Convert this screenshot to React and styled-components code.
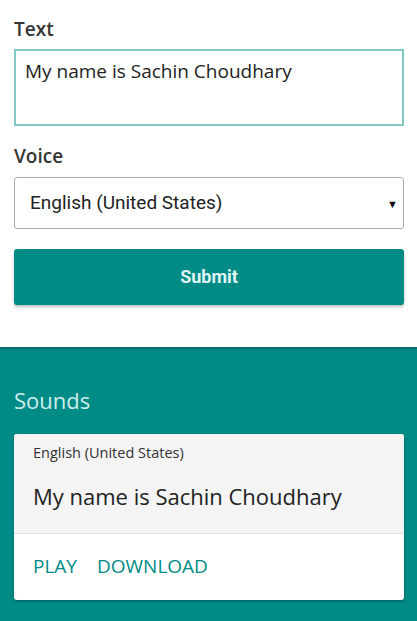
import React from 'react';
import styled, { createGlobalStyle } from 'styled-components';

const GlobalStyle = createGlobalStyle`
  html, body {
    margin: 0;
    padding: 0;
    background: #ffffff;
  }
  body {
    font-family: 'Open Sans', 'Noto Sans', sans-serif;
    color: #222222;
  }
  * {
    box-sizing: border-box;
  }
`;

const TEAL = '#008b87';

const sounds = [
  { voice: 'English (United States)', text: 'My name is Sachin Choudhary' },
];

function App() {
  const [text, setText] = React.useState('My name is Sachin Choudhary');
  const [voice, setVoice] = React.useState('en-US');

  return (
    <>
      <GlobalStyle />
      <Form onSubmit={(e) => e.preventDefault()}>
        <Label htmlFor='text'>Text</Label>
        <TextArea
          id='text'
          value={text}
          onChange={(e) => setText(e.target.value)}
        />
        <Label htmlFor='voice' $top={18}>
          Voice
        </Label>
        <SelectWrapper>
          <Select
            id='voice'
            value={voice}
            onChange={(e) => setVoice(e.target.value)}
          >
            <option value='en-US'>English (United States)</option>
            <option value='en-GB'>English (United Kingdom)</option>
          </Select>
          <Arrow>▼</Arrow>
        </SelectWrapper>
        <SubmitButton type='submit'>Submit</SubmitButton>
      </Form>
      <SoundsSection>
        <SectionTitle>Sounds</SectionTitle>
        {sounds.map((sound, index) => (
          <Card key={`sound-${index}`}>
            <CardBody>
              <VoiceName>{sound.voice}</VoiceName>
              <SoundText>{sound.text}</SoundText>
            </CardBody>
            <CardActions>
              <ActionButton>PLAY</ActionButton>
              <ActionButton>DOWNLOAD</ActionButton>
            </CardActions>
          </Card>
        ))}
      </SoundsSection>
    </>
  );
}

export default App;

const Form = styled.form`
  display: flex;
  flex-direction: column;
  padding: 16.5px 13px 0 14px;
`;

const Label = styled.label`
  display: block;
  font-size: 19px;
  font-weight: 600;
  line-height: 25px;
  color: #363636;
  margin-top: ${(p) => p.$top || 0}px;
  margin-bottom: 7.5px;
`;

const TextArea = styled.textarea`
  display: block;
  width: 100%;
  height: 77px;
  border: 2px solid #80c9c4;
  border-radius: 0;
  padding: 8px 9px;
  font-family: 'Open Sans', sans-serif;
  font-size: 19px;
  line-height: 25px;
  color: #222222;
  resize: none;
  outline: none;
`;

const SelectWrapper = styled.div`
  position: relative;
`;

const Select = styled.select`
  display: block;
  width: 100%;
  height: 52px;
  appearance: none;
  background: #ffffff;
  border: 1px solid #aaaaaa;
  border-radius: 3px;
  padding: 0 30px 0 15px;
  font-family: Roboto, sans-serif;
  font-size: 19px;
  color: #222222;
  outline: none;
`;

const Arrow = styled.span`
  position: absolute;
  right: 6px;
  top: 50%;
  transform: translateY(-50%);
  font-size: 11px;
  color: #111111;
  pointer-events: none;
`;

const SubmitButton = styled.button`
  margin-top: 20px;
  height: 56px;
  width: 100%;
  border: none;
  border-radius: 3px;
  background: ${TEAL};
  color: #dff5f2;
  font-family: Roboto, sans-serif;
  font-weight: 700;
  font-size: 18px;
  box-shadow: 0 2px 3px rgba(0, 0, 0, 0.25);
  cursor: pointer;
`;

const SoundsSection = styled.section`
  margin-top: 42px;
  background: ${TEAL};
  border-top: 1px solid #006e6a;
  box-shadow: inset 0 2px 2px -1px rgba(0, 0, 0, 0.25);
  padding: 37px 13px 40px 14px;
`;

const SectionTitle = styled.h2`
  margin: 0 0 19px;
  font-size: 22px;
  font-weight: 400;
  line-height: 30px;
  color: #cdeeea;
`;

const Card = styled.div`
  background: #ffffff;
  border-radius: 3px;
  overflow: hidden;
  box-shadow: 0 1px 3px rgba(0, 0, 0, 0.35);
`;

const CardBody = styled.div`
  background: #f4f4f4;
  padding: 9px 19px 22px;
  border-bottom: 1px solid #e2e2e2;
`;

const VoiceName = styled.div`
  font-size: 14.5px;
  line-height: 20px;
  color: #333333;
  margin-bottom: 18px;
`;

const SoundText = styled.div`
  font-size: 22px;
  line-height: 30px;
  color: #222222;
`;

const CardActions = styled.div`
  display: flex;
  gap: 20px;
  padding: 19px 19px 20px;
`;

const ActionButton = styled.button`
  border: none;
  background: none;
  padding: 0;
  font-family: 'Open Sans', sans-serif;
  font-size: 19px;
  line-height: 27px;
  color: ${TEAL};
  cursor: pointer;
`;
